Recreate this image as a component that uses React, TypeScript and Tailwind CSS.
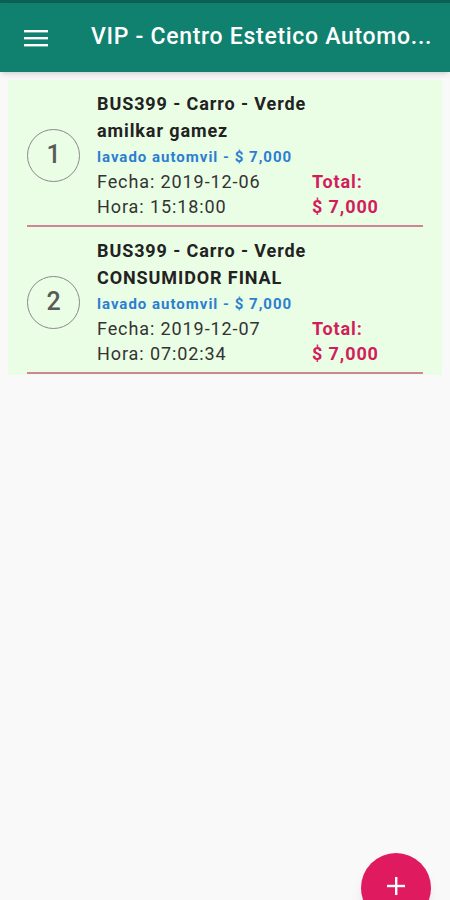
import React from "react";

type Sale = {
  n: number;
  plate: string;
  client: string;
  service: string;
  fecha: string;
  hora: string;
  total: string;
};

const sales: Sale[] = [
  { n: 1, plate: "BUS399 - Carro - Verde", client: "amilkar gamez", service: "lavado automvil - $ 7,000", fecha: "2019-12-06", hora: "15:18:00", total: "$ 7,000" },
  { n: 2, plate: "BUS399 - Carro - Verde", client: "CONSUMIDOR FINAL", service: "lavado automvil - $ 7,000", fecha: "2019-12-07", hora: "07:02:34", total: "$ 7,000" },
];

function SaleRow({ s }: { s: Sale }) {
  return (
    <div className="mx-[19px]">
      <div className="flex items-center pt-[11px] pb-[6px]">
        <div className="w-[53px] h-[53px] shrink-0 rounded-full border border-[#8a8a8a] flex items-center justify-center text-[25px] font-medium text-[#5a5a5a]">
          {s.n}
        </div>
        <div className="ml-[17px] flex-1 text-[#222]">
          <div className="text-[18px] font-bold leading-[26px] tracking-[0.9px] whitespace-nowrap">{s.plate}</div>
          <div className="text-[18px] font-bold leading-[28px] tracking-[0.9px] whitespace-nowrap">{s.client}</div>
          <div className="text-[15px] font-bold leading-[24px] tracking-[1px] text-[#2b7fd0] whitespace-nowrap">{s.service}</div>
          <div className="flex text-[18px] leading-[25px] tracking-[0.9px]">
            <div className="w-[215px] text-[#333] whitespace-nowrap">
              <div>Fecha: {s.fecha}</div>
              <div>Hora: {s.hora}</div>
            </div>
            <div className="font-bold text-[#d21d5c] whitespace-nowrap">
              <div>Total:</div>
              <div>{s.total}</div>
            </div>
          </div>
        </div>
      </div>
      <div className="h-[2px] bg-[#cf8596]" />
    </div>
  );
}

export default function App() {
  return (
    <div className="w-[450px] h-[900px] bg-[#f9f9f9] relative overflow-hidden" style={{ fontFamily: "Roboto, 'Noto Sans', sans-serif" }}>
      <div className="h-[3px] bg-[#0b5f53]" />
      <header className="h-[69px] bg-[#10806f] flex items-center shadow-md">
        <div className="w-[91px] pl-[24px]">
          <svg width="24" height="18" viewBox="0 0 24 18" className="mt-[1px]">
            <rect x="0" y="1" width="24" height="2.4" fill="white" />
            <rect x="0" y="8" width="24" height="2.4" fill="white" />
            <rect x="0" y="15" width="24" height="2.4" fill="white" />
          </svg>
        </div>
        <div className="text-white text-[23px] font-medium tracking-[0.7px] whitespace-nowrap">VIP - Centro Estetico Automo...</div>
      </header>
      <main className="mt-[8px] mx-[8px] bg-[#eafde5] pb-[1px]">
        {sales.map((s) => (
          <SaleRow key={s.n} s={s} />
        ))}
      </main>
      <button className="absolute left-[361px] top-[853px] w-[70px] h-[70px] rounded-full bg-[#df1a5f] shadow-lg flex justify-center pt-[23px]">
        <svg width="20" height="20" viewBox="0 0 20 20">
          <rect x="9" y="1" width="2.4" height="18" fill="white" />
          <rect x="1" y="8.8" width="18" height="2.4" fill="white" />
        </svg>
      </button>
    </div>
  );
}
